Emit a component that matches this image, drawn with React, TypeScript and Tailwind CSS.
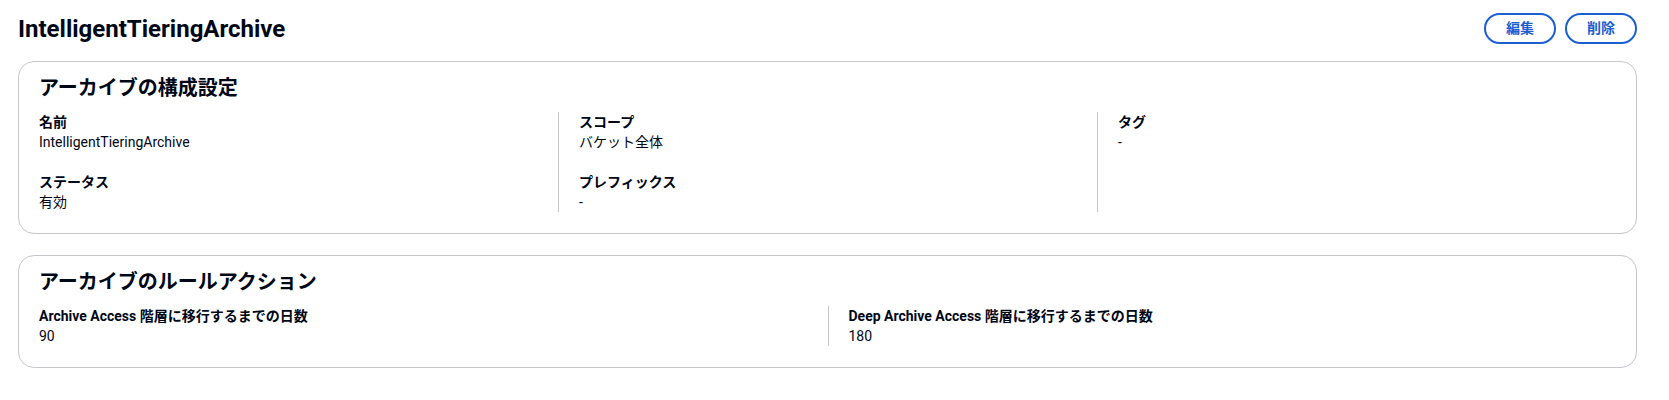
import React from "react";

type Item = { label: string; value: string };

const configColumns: Item[][] = [
  [
    { label: "名前", value: "IntelligentTieringArchive" },
    { label: "ステータス", value: "有効" },
  ],
  [
    { label: "スコープ", value: "バケット全体" },
    { label: "プレフィックス", value: "-" },
  ],
  [{ label: "タグ", value: "-" }],
];

const actionColumns: Item[][] = [
  [{ label: "Archive Access 階層に移行するまでの日数", value: "90" }],
  [{ label: "Deep Archive Access 階層に移行するまでの日数", value: "180" }],
];

const Field = ({ label, value }: Item) => (
  <div className="flex flex-col">
    <span className="text-[14px] leading-[20px] font-bold">{label}</span>
    <span className="text-[14px] leading-[20px]">{value}</span>
  </div>
);

const Panel = ({ title, columns, cols }: { title: string; columns: Item[][]; cols: string }) => (
  <div className="rounded-[16px] border border-[#c6c6cd] px-5 pt-[14px] pb-[21px]">
    <h2 className="text-[20px] leading-[24px] font-bold">{title}</h2>
    <div className={`-mx-5 mt-[12px] grid ${cols}`}>
      {columns.map((col, i) => (
        <div key={i} className={`flex flex-col gap-5 px-5 ${i > 0 ? "border-l border-[#c6c6cd]" : ""}`}>
          {col.map((it) => (
            <Field key={it.label} {...it} />
          ))}
        </div>
      ))}
    </div>
  </div>
);

export default function App() {
  return (
    <div className="min-h-[400px] bg-white pl-[18px] pr-[32px] pt-[13px] text-[#000716] font-[Roboto,Noto_Sans_CJK_JP,sans-serif]">
      {/* page header */}
      <div className="flex items-center justify-between h-[31px]">
        <h1 className="text-[24px] leading-[30px] font-bold">IntelligentTieringArchive</h1>
        <div className="flex gap-[9px]">
          <button className="h-[31px] w-[72px] rounded-full border-2 border-[#1b5fd3] text-[14px] font-bold text-[#1b5fd3]">
            編集
          </button>
          <button className="h-[31px] w-[72px] rounded-full border-2 border-[#1b5fd3] text-[14px] font-bold text-[#1b5fd3]">
            削除
          </button>
        </div>
      </div>

      <div className="mt-[17px] flex flex-col gap-[21px]">
        <Panel title="アーカイブの構成設定" columns={configColumns} cols="grid-cols-3" />
        <Panel title="アーカイブのルールアクション" columns={actionColumns} cols="grid-cols-2" />
      </div>
    </div>
  );
}
